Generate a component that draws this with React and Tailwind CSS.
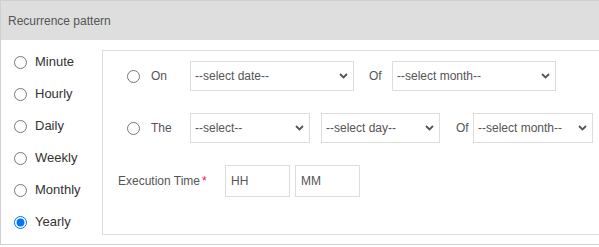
import { useState } from "react";

const periods = ["Minute", "Hourly", "Daily", "Weekly", "Monthly", "Yearly"];

function Chevron() {
  return (
    <svg
      className="pointer-events-none absolute right-[6px] top-1/2 -translate-y-1/2"
      width="9"
      height="6"
      viewBox="0 0 9 6"
      fill="none"
    >
      <path d="M1 1l3.5 3.5L8 1" stroke="#555" strokeWidth="1.8" />
    </svg>
  );
}

function Select({ width, placeholder }) {
  return (
    <div className={`relative h-[30px] ${width}`}>
      <select
        defaultValue=""
        className="h-full w-full appearance-none border border-[#ddd] bg-white pl-[4px] pr-6 text-[12px] text-[#555] outline-none"
      >
        <option value="">{placeholder}</option>
      </select>
      <Chevron />
    </div>
  );
}

function Radio({ checked, onChange, name }) {
  return (
    <input
      type="radio"
      name={name}
      checked={checked}
      onChange={onChange}
      className="m-0 h-[13px] w-[13px] shrink-0"
    />
  );
}

export default function App() {
  const [period, setPeriod] = useState("Yearly");
  const [mode, setMode] = useState("");

  return (
    <div className="h-[247px] w-[599px] overflow-hidden bg-white font-['Liberation_Sans',Arial,sans-serif]">
      <div className="w-[620px] border border-[#d0d0d0]">
        <div className="flex h-[39px] items-center bg-[#dedede] px-[7px] text-[12px] text-[#555]">
          Recurrence pattern
        </div>
        <div className="flex">
          {/* period list */}
          <div className="w-[101px] shrink-0 py-[6px]">
            {periods.map((p) => (
              <label
                key={p}
                className="flex h-8 cursor-pointer items-center gap-2 pl-[13px] text-[13px] text-[#333]"
              >
                <Radio
                  name="period"
                  checked={period === p}
                  onChange={() => setPeriod(p)}
                />
                {p}
              </label>
            ))}
          </div>

          {/* yearly options */}
          <div className="mt-[10px] mr-[10px] h-[185px] flex-1 border border-[#ddd] pt-[10px] text-[12px] text-[#555]">
            <div className="flex h-[30px] items-center pl-[24px]">
              <label className="flex w-[63px] items-center">
                <Radio
                  name="mode"
                  checked={mode === "on"}
                  onChange={() => setMode("on")}
                />
                <span className="ml-[11px]">On</span>
              </label>
              <Select width="w-[164px]" placeholder="--select date--" />
              <span className="ml-[15px] w-[23px]">Of</span>
              <Select width="w-[164px]" placeholder="--select month--" />
            </div>

            <div className="mt-[22px] flex h-[30px] items-center pl-[24px]">
              <label className="flex w-[63px] items-center">
                <Radio
                  name="mode"
                  checked={mode === "the"}
                  onChange={() => setMode("the")}
                />
                <span className="ml-[11px]">The</span>
              </label>
              <Select width="w-[120px]" placeholder="--select--" />
              <div className="ml-[11px]">
                <Select width="w-[119px]" placeholder="--select day--" />
              </div>
              <span className="ml-[16px] w-[17px]">Of</span>
              <Select width="w-[120px]" placeholder="--select month--" />
            </div>

            <div className="mt-[22px] flex h-[32px] items-center pl-[15px]">
              <span className="w-[107px]">
                Execution Time<span className="ml-[2px] text-[#e8174e]">*</span>
              </span>
              <input
                placeholder="HH"
                className="h-full w-[65px] border border-[#ddd] pl-[5px] text-[12px] text-[#555] outline-none placeholder:text-[#555]"
              />
              <input
                placeholder="MM"
                className="ml-[5px] h-full w-[65px] border border-[#ddd] pl-[5px] text-[12px] text-[#555] outline-none placeholder:text-[#555]"
              />
            </div>
          </div>
        </div>
      </div>
    </div>
  );
}
